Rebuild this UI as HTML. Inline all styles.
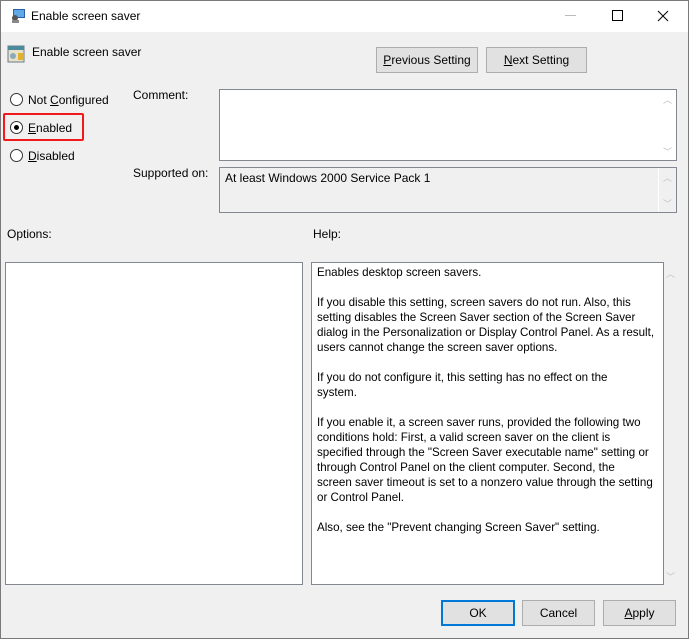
<!DOCTYPE html>
<html><head><meta charset="utf-8"><style>
*{margin:0;padding:0;box-sizing:border-box}
body{width:689px;height:639px;background:#fff;font-family:"Liberation Sans",sans-serif;font-size:12px;color:#000;position:relative;overflow:hidden}
.win{position:absolute;left:0;top:0;width:689px;height:639px;border:1px solid #7a7a7a;background:#f0f0f0}
.title{position:absolute;left:1px;top:1px;width:687px;height:31px;background:#fff}
.abs{position:absolute;white-space:nowrap}
.btn{position:absolute;height:26px;background:#e1e1e1;border:1px solid #adadad;text-align:center;line-height:24px}
.box{position:absolute;background:#fff;border:1px solid #828790}
.radio{position:absolute;width:13px;height:13px;border:1px solid #333;border-radius:50%;background:#fff}
.arr{position:absolute;color:#c0c0c0;font-size:9px}
u{text-decoration:underline}
.help div{height:15px;line-height:15px;font-size:11.6px}
</style></head><body>
<div class="win"></div>
<div class="title"></div>
<svg class="abs" style="left:10px;top:8px" width="16" height="16"><rect x="3" y="1" width="12" height="9" fill="#2a5ea8"/><rect x="4" y="2" width="10" height="7" fill="#5fa8e8"/><circle cx="5" cy="10" r="3" fill="#555"/><rect x="2" y="12" width="7" height="3" fill="#888"/></svg>
<div class="abs" style="left:31px;top:9px">Enable screen saver</div>
<div class="abs" style="left:565px;top:15px;width:11px;height:1px;background:#bbb"></div>
<div class="abs" style="left:612px;top:10px;width:11px;height:11px;border:1px solid #000"></div>
<svg class="abs" style="left:657px;top:10px" width="12" height="12"><path d="M1 1L11 11M11 1L1 11" stroke="#000" stroke-width="1"/></svg>
<svg class="abs" style="left:7px;top:45px" width="18" height="18"><rect x="1" y="1" width="16" height="16" fill="#e8e0c8" stroke="#6a7a8a"/><rect x="1" y="1" width="16" height="4" fill="#4a8a9a"/><circle cx="6" cy="11" r="3" fill="#8ab"/><rect x="11" y="8" width="5" height="7" fill="#e0b030"/></svg>
<div class="abs" style="left:32px;top:45px">Enable screen saver</div>
<div class="btn" style="left:376px;top:47px;width:102px"><u>P</u>revious Setting</div>
<div class="btn" style="left:486px;top:47px;width:101px"><u>N</u>ext Setting</div>
<div class="radio" style="left:10px;top:93px"></div><div class="abs" style="left:28px;top:93px">Not <u>C</u>onfigured</div>
<div class="radio" style="left:10px;top:121px"><div style="position:absolute;left:3px;top:3px;width:5px;height:5px;border-radius:50%;background:#000"></div></div><div class="abs" style="left:28px;top:121px"><u>E</u>nabled</div>
<div class="abs" style="left:3px;top:113px;width:81px;height:28px;border:2px solid #f0191c;border-radius:2px"></div>
<div class="radio" style="left:10px;top:149px"></div><div class="abs" style="left:28px;top:149px"><u>D</u>isabled</div>
<div class="abs" style="left:133px;top:88px">Comment:</div>
<div class="box" style="left:219px;top:89px;width:458px;height:72px"></div>
<div class="arr" style="left:663px;top:93px">︿</div><div class="arr" style="left:663px;top:145px">﹀</div>
<div class="abs" style="left:133px;top:166px">Supported on:</div>
<div class="box" style="left:219px;top:167px;width:458px;height:46px;background:#f0f0f0;border-color:#828790"></div>
<div class="abs" style="left:225px;top:171px">At least Windows 2000 Service Pack 1</div>
<div class="abs" style="left:658px;top:168px;width:1px;height:44px;background:#fff"></div>
<div class="arr" style="left:663px;top:171px">︿</div><div class="arr" style="left:663px;top:197px">﹀</div>
<div class="abs" style="left:7px;top:227px">Options:</div>
<div class="abs" style="left:313px;top:227px">Help:</div>
<div class="box" style="left:5px;top:262px;width:298px;height:323px"></div>
<div class="box help" style="left:311px;top:262px;width:353px;height:323px;padding:2px 0 0 5px">
<div>Enables desktop screen savers.</div><div></div>
<div>If you disable this setting, screen savers do not run. Also, this</div>
<div>setting disables the Screen Saver section of the Screen Saver</div>
<div>dialog in the Personalization or Display Control Panel. As a result,</div>
<div>users cannot change the screen saver options.</div><div></div>
<div>If you do not configure it, this setting has no effect on the</div>
<div>system.</div><div></div>
<div>If you enable it, a screen saver runs, provided the following two</div>
<div>conditions hold: First, a valid screen saver on the client is</div>
<div>specified through the "Screen Saver executable name" setting or</div>
<div>through Control Panel on the client computer. Second, the</div>
<div>screen saver timeout is set to a nonzero value through the setting</div>
<div>or Control Panel.</div><div></div>
<div>Also, see the "Prevent changing Screen Saver" setting.</div>
</div>
<div class="arr" style="left:666px;top:267px">︿</div><div class="arr" style="left:666px;top:570px">﹀</div>
<div class="btn" style="left:441px;top:600px;width:74px;border:2px solid #0078d7;line-height:22px">OK</div>
<div class="btn" style="left:522px;top:600px;width:73px">Cancel</div>
<div class="btn" style="left:603px;top:600px;width:73px"><u>A</u>pply</div>
</body></html>
